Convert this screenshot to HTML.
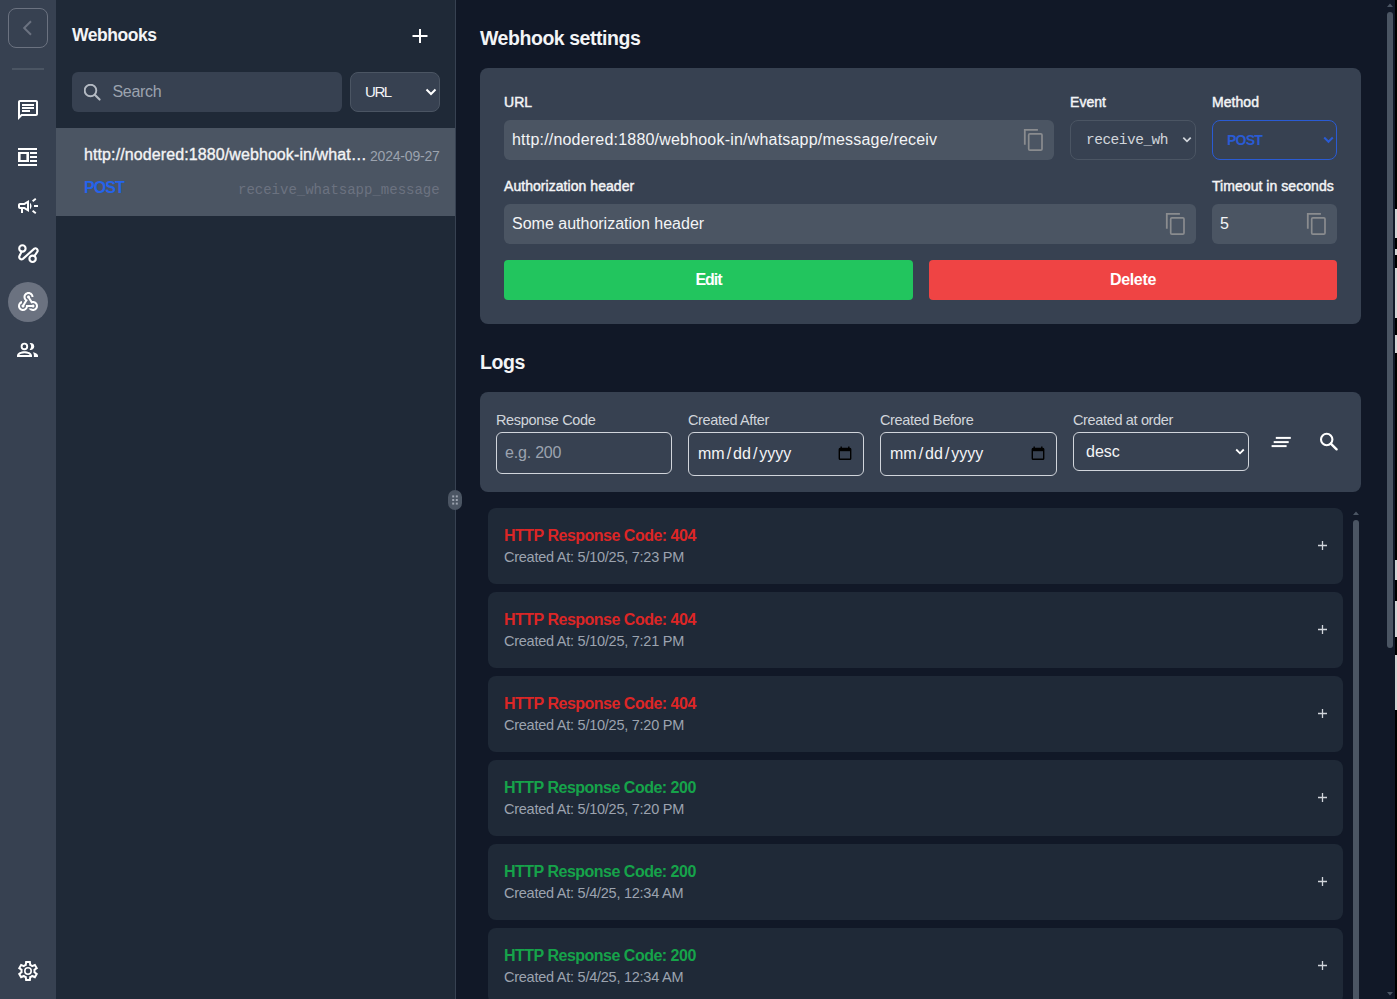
<!DOCTYPE html>
<html><head><meta charset="utf-8">
<style>
*{box-sizing:border-box;margin:0;padding:0}
html,body{width:1397px;height:999px;overflow:hidden;background:#111827;font-family:"Liberation Sans",sans-serif;color:#f3f4f6}
.abs{position:absolute}
#rail{left:0;top:0;width:56px;height:999px;background:#374151}
#panel{left:56px;top:0;width:400px;height:999px;background:#1f2937;border-right:1px solid #374151}
#main{left:456px;top:0;width:941px;height:999px;background:#111827}
.ic{position:absolute;left:16px;width:24px;height:24px}
.t{position:absolute;white-space:nowrap;line-height:1}
</style></head><body>
<div id="rail" class="abs">
  <div class="abs" style="left:8px;top:8px;width:40px;height:40px;border:1px solid #6b7280;border-radius:8px"></div>
  <svg class="abs" style="left:0;top:0" width="56" height="56" viewBox="0 0 56 56"><path d="M31 21.3 L24.2 28 L31 34.7" fill="none" stroke="#6b7280" stroke-width="2"/></svg>
  <div class="abs" style="left:12px;top:68px;width:32px;height:2px;background:#4b5563"></div>
  <svg class="ic" style="top:98px" viewBox="0 0 24 24" fill="#fff"><path d="M20 2H4c-1.1 0-2 .9-2 2v18l4-4h14c1.1 0 2-.9 2-2V4c0-1.1-.9-2-2-2zm0 14H5.17L4 17.17V4h16v12zM6 12h8v2H6zm0-3h12v2H6zm0-3h12v2H6z"/></svg>
  <svg class="ic" style="top:146px" viewBox="0 0 24 24" fill="#fff"><path d="M2 2h19v2H2zM2 6h11v10H2zM4.6 8v6h5.8V8zM14 6h7v2h-7zM14 10h7v2h-7zM14 14h7v2h-7zM2 18h19v2H2z" fill-rule="evenodd"/></svg>
  <svg class="ic" style="top:194px" viewBox="0 0 24 24" fill="#fff"><path d="M18 11v2h4v-2h-4zm-2 6.61c.96.71 2.21 1.65 3.2 2.39.4-.53.8-1.07 1.2-1.6-.99-.74-2.24-1.68-3.2-2.4-.4.54-.8 1.08-1.2 1.61zM20.4 5.6c-.4-.53-.8-1.07-1.2-1.6-.99.74-2.24 1.68-3.2 2.4.4.53.8 1.070 1.2 1.6.96-.72 2.21-1.65 3.2-2.4zM4 9c-1.1 0-2 .9-2 2v2c0 1.1.9 2 2 2h1v4h2v-4h1l5 3V6L8 9H4zm5.03 1.71L11 9.53v4.94l-1.97-1.18-.48-.29H4v-2h4.55l.48-.29zM15.5 12c0-1.33-.58-2.53-1.5-3.35v6.69c.92-.81 1.5-2.01 1.5-3.34z"/></svg>
  <svg class="ic" style="top:242px" viewBox="0 0 24 24" fill="none" stroke="#fff" stroke-width="2.1" stroke-linecap="round"><circle cx="6.4" cy="6.4" r="3.2"/><circle cx="16.6" cy="16.8" r="3.2"/><path d="M5.6 9.6 L3.4 14.2 A2.3 2.3 0 0 0 6.9 16.9 L18.3 6.6 A2.3 2.3 0 0 1 21.6 9.2 L18.6 13.8"/></svg>
  <div class="abs" style="left:8px;top:282px;width:40px;height:40px;border-radius:50%;background:#6b7280"></div>
  <svg class="ic" style="top:290px" viewBox="0 0 24 24" fill="#fff"><path d="M10 15h5.88c.27-.31.67-.5 1.12-.5.83 0 1.5.67 1.5 1.5s-.67 1.5-1.5 1.5c-.44 0-.84-.19-1.12-.5H11.9c-.46 2.28-2.48 4-4.9 4-2.760 0-5-2.24-5-5 0-2.42 1.72-4.44 4-4.9v2.07c-1.16.41-2 1.53-2 2.83 0 1.65 1.35 3 3 3s3-1.35 3-3v-1zm2.5-11c1.65 0 3 1.35 3 3h2c0-2.76-2.24-5-5-5s-5 2.24-5 5c0 1.43.6 2.71 1.55 3.62l-2.35 3.9c-.68.14-1.2.75-1.2 1.48 0 .83.67 1.5 1.5 1.5s1.5-.67 1.5-1.5c0-.16-.02-.31-.07-.45l3.38-5.63C10.49 9.61 9.5 8.42 9.5 7c0-1.65 1.35-3 3-3zm4.5 9c-.64 0-1.230.2-1.72.54l-3.05-5.07C11.53 8.35 11 7.74 11 7c0-.83.67-1.5 1.5-1.5S14 6.17 14 7c0 .15-.02.29-.06.43l2.19 3.65c.28-.05.57-.08.87-.08 2.76 0 5 2.24 5 5s-2.24 5-5 5c-1.85 0-3.47-1.01-4.33-2.5h2.67c.48.32 1.05.5 1.66.5 1.65 0 3-1.35 3-3s-1.35-3-3-3z"/></svg>
  <svg class="ic" style="top:338px" viewBox="0 0 24 24" fill="#fff"><circle cx="8.4" cy="8.4" r="2.8" fill="none" stroke="#fff" stroke-width="1.9"/><path d="M13.6 5.1A3.5 3.5 0 1 1 13.6 11.7A4.8 4.8 0 0 0 13.6 5.1Z"/><path fill-rule="evenodd" d="M1 19V17.6C1 14.7 5.2 13.2 8.5 13.2C11.8 13.2 16 14.7 16 17.6V19ZM3.3 17.1C3.8 16 6.3 15.3 8.5 15.3C10.7 15.3 13.2 16 13.7 17.1Z"/><path d="M16.8 14.2C19.6 14.8 22 16 22 17.6V19H17.9V17.6C17.9 16.2 17.6 15.1 16.8 14.2Z"/></svg>
  <svg class="ic" style="top:959px" viewBox="0 -960 960 960" fill="#fff"><path d="m370-80-16-128q-13-5-24.5-12T307-235l-119 50L78-375l103-78q-1-7-1-13.5v-27q0-6.5 1-13.5L78-585l110-190 119 50q11-8 23-15t24-12l16-128h220l16 128q13 5 24.5 12t22.5 15l119-50 110 190-103 78q1 7 1 13.5v27q0 6.5-2 13.5l103 78-110 190-118-50q-11 8-23 15t-24 12L590-80H370Zm70-80h79l14-106q31-8 57.5-23.5T639-327l99 41 39-68-86-65q5-14 7-29.5t2-31.5q0-16-2-31.5t-7-29.5l86-65-39-68-99 42q-22-23-48.5-38.5T533-694l-13-106h-79l-14 106q-31 8-57.5 23.5T321-633l-99-41-39 68 86 64q-5 15-7 30t-2 32q0 16 2 31t7 30l-86 65 39 68 99-42q22 23 48.5 38.5T427-266l13 106Z"/><circle cx="480" cy="-480" r="128" fill="none" stroke="#fff" stroke-width="64"/></svg>
</div>

<div id="main" class="abs"></div>
<div id="panel" class="abs"></div>
<div class="t" style="left:72px;top:27.1px;font-size:17.5px;font-weight:bold;letter-spacing:-0.45px;color:#f3f4f6">Webhooks</div>
<svg class="abs" style="left:412px;top:28px" width="16" height="16" viewBox="0 0 16 16"><path d="M8 1V15M0.5 8H15.5" stroke="#fff" stroke-width="2"/></svg>
<div class="abs" style="left:72px;top:72px;width:270px;height:40px;border-radius:6px;background:#374151"></div>
<svg class="abs" style="left:84px;top:84px" width="18" height="18" viewBox="0 0 18 18"><circle cx="6.5" cy="6.5" r="5.8" fill="none" stroke="#b4bac3" stroke-width="1.9"/><path d="M10.8 10.8L15.6 15.6" stroke="#b4bac3" stroke-width="2.1" stroke-linecap="round"/></svg>
<div class="t" style="left:112.5px;top:84.4px;font-size:16px;letter-spacing:-0.3px;color:#9ca3af">Search</div>
<div class="abs" style="left:350px;top:72px;width:90px;height:40px;border-radius:8px;background:#374151;border:1px solid #4b5563"></div>
<div class="t" style="left:365px;top:84.2px;font-size:15px;letter-spacing:-1.4px;color:#f3f4f6">URL</div>
<svg class="abs" style="left:425px;top:88px" width="12" height="8" viewBox="0 0 12 8"><path d="M1.5 1.5L6 6L10.5 1.5" fill="none" stroke="#fff" stroke-width="2"/></svg>
<div class="abs" style="left:56px;top:128px;width:399px;height:88px;background:#4b5563"></div>
<div class="t" style="left:84px;top:147.4px;font-size:16px;letter-spacing:0.1px;-webkit-text-stroke:0.35px #f3f4f6;color:#f3f4f6">http://nodered:1880/webhook-in/what…</div>
<div class="t" style="left:370px;top:148.8px;font-size:14px;letter-spacing:-0.2px;color:#9ca3af">2024-09-27</div>
<div class="t" style="left:84px;top:180.4px;font-size:16px;font-weight:bold;letter-spacing:-0.9px;color:#2563eb">POST</div>
<div class="t" style="left:238px;top:183.4px;font-size:14px;font-family:'Liberation Mono',monospace;color:#6b7280">receive_whatsapp_message</div>
<div class="abs" style="left:455px;top:0;width:1px;height:999px;background:#374151"></div>
<div class="abs" style="left:448px;top:490px;width:14px;height:20px;border-radius:7px;background:#4b5563"></div>
<svg class="abs" style="left:448px;top:490px" width="14" height="20" viewBox="0 0 14 20" fill="#9ca3af"><rect x="4.2" y="5.4" width="2" height="2"/><rect x="7.8" y="5.4" width="2" height="2"/><rect x="4.2" y="9" width="2" height="2"/><rect x="7.8" y="9" width="2" height="2"/><rect x="4.2" y="12.6" width="2" height="2"/><rect x="7.8" y="12.6" width="2" height="2"/></svg>


<!-- MAIN -->
<div class="t" style="left:480px;top:28.5px;font-size:19.5px;font-weight:bold;letter-spacing:-0.45px;color:#f3f4f6">Webhook settings</div>
<div class="abs" style="left:480px;top:68px;width:881px;height:256px;border-radius:8px;background:#374151"></div>
<div class="t" style="left:504px;top:95px;font-size:14px;letter-spacing:0.05px;-webkit-text-stroke:0.45px #f3f4f6;color:#f3f4f6">URL</div>
<div class="t" style="left:1070px;top:95px;font-size:14px;letter-spacing:0.05px;-webkit-text-stroke:0.45px #f3f4f6;color:#f3f4f6">Event</div>
<div class="t" style="left:1212px;top:95px;font-size:14px;letter-spacing:0.05px;-webkit-text-stroke:0.45px #f3f4f6;color:#f3f4f6">Method</div>
<div class="abs" style="left:504px;top:120px;width:550px;height:40px;border-radius:6px;background:#4b5563"></div>
<div class="t" style="left:512px;top:132.4px;font-size:16px;letter-spacing:0.2px;color:#f3f4f6">http://nodered:1880/webhook-in/whatsapp/message/receiv</div>
<svg class="abs copy" style="left:1022px;top:128px" width="24" height="24" viewBox="0 0 24 24"><path d="M2.8 16.8V1.95H15.9" fill="none" stroke="#8a8c8f" stroke-width="1.8"/><rect x="6.7" y="5.8" width="13.3" height="16.3" rx="1.2" fill="none" stroke="#8a8c8f" stroke-width="1.7"/></svg>
<div class="abs" style="left:1070px;top:120px;width:126px;height:40px;border-radius:8px;background:#374151;border:1px solid #4b5563"></div>
<div class="t" style="left:1086px;top:133.3px;font-size:14.5px;letter-spacing:-0.5px;font-family:'Liberation Mono',monospace;color:#d1d5db">receive_wh</div>
<svg class="abs" style="left:1182px;top:136px" width="10" height="8" viewBox="0 0 10 8"><path d="M1.3 1.6L5 5.3L8.7 1.6" fill="none" stroke="#d1d5db" stroke-width="1.7"/></svg>
<div class="abs" style="left:1212px;top:120px;width:125px;height:40px;border-radius:8px;background:#374151;border:1.5px solid #2a5bd4"></div>
<div class="t" style="left:1227px;top:132.9px;font-size:14px;font-weight:bold;letter-spacing:-0.8px;color:#2a5bd4">POST</div>
<svg class="abs" style="left:1323px;top:136px" width="11" height="8" viewBox="0 0 11 8"><path d="M1.2 1.5L5.5 5.8L9.8 1.5" fill="none" stroke="#2a5bd4" stroke-width="2"/></svg>
<div class="t" style="left:504px;top:179px;font-size:14px;letter-spacing:0.05px;-webkit-text-stroke:0.45px #f3f4f6;color:#f3f4f6">Authorization header</div>
<div class="t" style="left:1212px;top:179px;font-size:14px;letter-spacing:0.05px;-webkit-text-stroke:0.45px #f3f4f6;color:#f3f4f6">Timeout in seconds</div>
<div class="abs" style="left:504px;top:204px;width:692px;height:40px;border-radius:6px;background:#4b5563"></div>
<div class="t" style="left:512px;top:216.4px;font-size:16px;color:#f3f4f6">Some authorization header</div>
<svg class="abs copy" style="left:1164px;top:212px" width="24" height="24" viewBox="0 0 24 24"><path d="M2.8 16.8V1.95H15.9" fill="none" stroke="#8a8c8f" stroke-width="1.8"/><rect x="6.7" y="5.8" width="13.3" height="16.3" rx="1.2" fill="none" stroke="#8a8c8f" stroke-width="1.7"/></svg>
<div class="abs" style="left:1212px;top:204px;width:125px;height:40px;border-radius:6px;background:#4b5563"></div>
<div class="t" style="left:1220px;top:216.4px;font-size:16px;color:#f3f4f6">5</div>
<svg class="abs copy" style="left:1305px;top:212px" width="24" height="24" viewBox="0 0 24 24"><path d="M2.8 16.8V1.95H15.9" fill="none" stroke="#8a8c8f" stroke-width="1.8"/><rect x="6.7" y="5.8" width="13.3" height="16.3" rx="1.2" fill="none" stroke="#8a8c8f" stroke-width="1.7"/></svg>
<div class="abs btn" style="left:504px;top:260px;width:409px;height:40px;border-radius:4px;background:#22c55e"></div>
<div class="t" style="left:504px;width:409px;text-align:center;top:271.8px;font-size:16px;font-weight:bold;letter-spacing:-1px;color:#fff">Edit</div>
<div class="abs btn" style="left:929px;top:260px;width:408px;height:40px;border-radius:4px;background:#ef4444"></div>
<div class="t" style="left:929px;width:408px;text-align:center;top:271.8px;font-size:16px;font-weight:bold;letter-spacing:-0.3px;color:#fff">Delete</div>

<div class="t" style="left:480px;top:353px;font-size:19.5px;font-weight:bold;letter-spacing:-0.45px;color:#f3f4f6">Logs</div>
<div class="abs" style="left:480px;top:392px;width:881px;height:100px;border-radius:8px;background:#374151"></div>
<div class="t" style="left:496px;top:412.6px;font-size:14.5px;letter-spacing:-0.35px;color:#d1d5db">Response Code</div>
<div class="t" style="left:688px;top:412.6px;font-size:14.5px;letter-spacing:-0.35px;color:#d1d5db">Created After</div>
<div class="t" style="left:880px;top:412.6px;font-size:14.5px;letter-spacing:-0.35px;color:#d1d5db">Created Before</div>
<div class="t" style="left:1073px;top:412.6px;font-size:14.5px;letter-spacing:-0.35px;color:#d1d5db">Created at order</div>
<div class="abs" style="left:496px;top:432px;width:176px;height:42px;border-radius:6px;border:1.5px solid #d1d5db"></div>
<div class="t" style="left:505px;top:445.1px;font-size:16px;letter-spacing:-0.2px;color:#9ca3af">e.g. 200</div>
<div class="abs" style="left:688px;top:432px;width:176px;height:44px;border-radius:6px;border:1.5px solid #d1d5db"></div>
<div class="t" style="left:698px;top:446.2px;font-size:16px;color:#f3f4f6">mm<span style="margin:0 2px">/</span>dd<span style="margin:0 2px">/</span>yyyy</div>
<svg class="abs cal" style="left:838px;top:446px" width="14" height="14" viewBox="0 0 14 14"><path d="M3.2 0.6v2M10.8 0.6v2" stroke="#000" stroke-width="1.4"/><rect x="1.3" y="2.4" width="11.4" height="10.8" rx="0.8" fill="none" stroke="#000" stroke-width="1.4"/><rect x="1.3" y="2.4" width="11.4" height="2.8" fill="#000"/></svg>
<div class="abs" style="left:880px;top:432px;width:177px;height:44px;border-radius:6px;border:1.5px solid #d1d5db"></div>
<div class="t" style="left:890px;top:446.2px;font-size:16px;color:#f3f4f6">mm<span style="margin:0 2px">/</span>dd<span style="margin:0 2px">/</span>yyyy</div>
<svg class="abs cal" style="left:1031px;top:446px" width="14" height="14" viewBox="0 0 14 14"><path d="M3.2 0.6v2M10.8 0.6v2" stroke="#000" stroke-width="1.4"/><rect x="1.3" y="2.4" width="11.4" height="10.8" rx="0.8" fill="none" stroke="#000" stroke-width="1.4"/><rect x="1.3" y="2.4" width="11.4" height="2.8" fill="#000"/></svg>
<div class="abs" style="left:1073px;top:432px;width:176px;height:39px;border-radius:6px;border:1.5px solid #d1d5db"></div>
<div class="t" style="left:1086px;top:444px;font-size:16px;color:#f3f4f6">desc</div>
<svg class="abs" style="left:1235px;top:448px" width="10" height="8" viewBox="0 0 10 8"><path d="M1.2 1.5L5 5.3L8.8 1.5" fill="none" stroke="#fff" stroke-width="1.8"/></svg>
<svg class="abs" style="left:1270px;top:434px" width="22" height="16" viewBox="0 0 22 16" fill="#fff"><rect x="5.8" y="2.9" width="15" height="2"/><rect x="3.7" y="7.1" width="15" height="2"/><rect x="1.6" y="11.1" width="15" height="2"/></svg>
<svg class="abs" style="left:1318px;top:432px" width="22" height="22" viewBox="0 0 22 22"><circle cx="8.7" cy="7.5" r="5.7" fill="none" stroke="#fff" stroke-width="2.1"/><path d="M12.8 11.6L18.6 17.3" stroke="#fff" stroke-width="2.4" stroke-linecap="round"/></svg>
<div class="abs" style="left:488px;top:508px;width:855px;height:76px;border-radius:8px;background:#1f2937"></div>
<div class="t" style="left:504px;top:528.1px;font-size:16px;font-weight:bold;letter-spacing:-0.5px;color:#dc2626">HTTP Response Code: 404</div>
<div class="t" style="left:504px;top:550.4px;font-size:14.5px;letter-spacing:-0.25px;color:#9ca3af">Created At: 5/10/25, 7:23 PM</div>
<svg class="abs" style="left:1317px;top:540px" width="11" height="11" viewBox="0 0 11 11"><path d="M5.5 1V10M1 5.5H10" stroke="#d1d5db" stroke-width="1.3"/></svg>
<div class="abs" style="left:488px;top:592px;width:855px;height:76px;border-radius:8px;background:#1f2937"></div>
<div class="t" style="left:504px;top:612.1px;font-size:16px;font-weight:bold;letter-spacing:-0.5px;color:#dc2626">HTTP Response Code: 404</div>
<div class="t" style="left:504px;top:634.4px;font-size:14.5px;letter-spacing:-0.25px;color:#9ca3af">Created At: 5/10/25, 7:21 PM</div>
<svg class="abs" style="left:1317px;top:624px" width="11" height="11" viewBox="0 0 11 11"><path d="M5.5 1V10M1 5.5H10" stroke="#d1d5db" stroke-width="1.3"/></svg>
<div class="abs" style="left:488px;top:676px;width:855px;height:76px;border-radius:8px;background:#1f2937"></div>
<div class="t" style="left:504px;top:696.1px;font-size:16px;font-weight:bold;letter-spacing:-0.5px;color:#dc2626">HTTP Response Code: 404</div>
<div class="t" style="left:504px;top:718.4px;font-size:14.5px;letter-spacing:-0.25px;color:#9ca3af">Created At: 5/10/25, 7:20 PM</div>
<svg class="abs" style="left:1317px;top:708px" width="11" height="11" viewBox="0 0 11 11"><path d="M5.5 1V10M1 5.5H10" stroke="#d1d5db" stroke-width="1.3"/></svg>
<div class="abs" style="left:488px;top:760px;width:855px;height:76px;border-radius:8px;background:#1f2937"></div>
<div class="t" style="left:504px;top:780.1px;font-size:16px;font-weight:bold;letter-spacing:-0.5px;color:#16a34a">HTTP Response Code: 200</div>
<div class="t" style="left:504px;top:802.4px;font-size:14.5px;letter-spacing:-0.25px;color:#9ca3af">Created At: 5/10/25, 7:20 PM</div>
<svg class="abs" style="left:1317px;top:792px" width="11" height="11" viewBox="0 0 11 11"><path d="M5.5 1V10M1 5.5H10" stroke="#d1d5db" stroke-width="1.3"/></svg>
<div class="abs" style="left:488px;top:844px;width:855px;height:76px;border-radius:8px;background:#1f2937"></div>
<div class="t" style="left:504px;top:864.1px;font-size:16px;font-weight:bold;letter-spacing:-0.5px;color:#16a34a">HTTP Response Code: 200</div>
<div class="t" style="left:504px;top:886.4px;font-size:14.5px;letter-spacing:-0.25px;color:#9ca3af">Created At: 5/4/25, 12:34 AM</div>
<svg class="abs" style="left:1317px;top:876px" width="11" height="11" viewBox="0 0 11 11"><path d="M5.5 1V10M1 5.5H10" stroke="#d1d5db" stroke-width="1.3"/></svg>
<div class="abs" style="left:488px;top:928px;width:855px;height:76px;border-radius:8px;background:#1f2937"></div>
<div class="t" style="left:504px;top:948.1px;font-size:16px;font-weight:bold;letter-spacing:-0.5px;color:#16a34a">HTTP Response Code: 200</div>
<div class="t" style="left:504px;top:970.4px;font-size:14.5px;letter-spacing:-0.25px;color:#9ca3af">Created At: 5/4/25, 12:34 AM</div>
<svg class="abs" style="left:1317px;top:960px" width="11" height="11" viewBox="0 0 11 11"><path d="M5.5 1V10M1 5.5H10" stroke="#d1d5db" stroke-width="1.3"/></svg>
<div class="abs" style="left:1353px;top:520px;width:6px;height:500px;border-radius:3px;background:#4b5563"></div>
<svg class="abs" style="left:1353px;top:511px" width="6" height="4" viewBox="0 0 6 4"><path d="M0 4L3 0.5L6 4Z" fill="#4b5563"/></svg>
<div class="abs" style="left:1387px;top:12px;width:6px;height:636px;border-radius:3px;background:#4b5563"></div>
<svg class="abs" style="left:1387px;top:3px" width="6" height="4" viewBox="0 0 6 4"><path d="M0 4L3 0.5L6 4Z" fill="#4b5563"/></svg>
<svg class="abs" style="left:1387px;top:992px" width="6" height="4" viewBox="0 0 6 4"><path d="M0 0L3 3.5L6 0Z" fill="#4b5563"/></svg>
<div class="abs" style="left:1395px;top:0;width:2px;height:999px;background:#000"></div>
<div class="abs" style="left:1395px;top:209px;width:2px;height:29px;background:#d4d4d4"></div><div class="abs" style="left:1395px;top:249px;width:2px;height:6px;background:#d4d4d4"></div><div class="abs" style="left:1395px;top:268px;width:2px;height:50px;background:#d4d4d4"></div><div class="abs" style="left:1395px;top:335px;width:2px;height:18px;background:#d4d4d4"></div><div class="abs" style="left:1395px;top:560px;width:2px;height:20px;background:#d4d4d4"></div><div class="abs" style="left:1395px;top:601px;width:2px;height:36px;background:#d4d4d4"></div><div class="abs" style="left:1395px;top:655px;width:2px;height:55px;background:#d4d4d4"></div>
</body></html>
